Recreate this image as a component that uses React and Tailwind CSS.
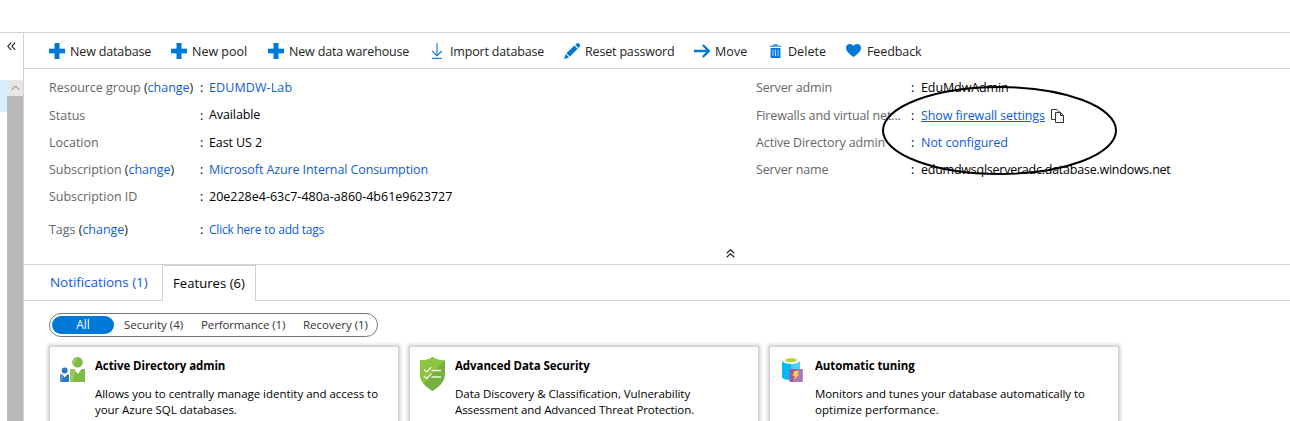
const blue = 'text-[#0f5be0]';

function Plus() {
  return (
    <svg width="16" height="16" viewBox="0 0 16 16" className="block">
      <path d="M0 5.5h16v5H0z" fill="#4ba3e8" />
      <path d="M5.5 0h5v16h-5z" fill="#0078d7" />
      <path d="M0 6h16v4H0z" fill="#0078d7" />
    </svg>
  );
}

function Download() {
  return (
    <svg width="14" height="16" viewBox="0 0 14 16" className="block" fill="none" stroke="#1a86db" strokeWidth="1.2">
      <path d="M7 0v12.5M2.2 8 7 12.8 11.8 8M2 15.3h10" />
    </svg>
  );
}

function Pencil() {
  return (
    <svg width="17" height="16" viewBox="0 0 17 16" className="block" fill="#0078d7">
      <path d="M0 16 1.7 11 5.2 14.4zM2.4 10.2 10.4 2.6 13.7 5.8 5.9 13.6zM11.3 1.8 12.8.5Q13.8-.3 14.8.5L15.8 1.5Q16.6 2.5 15.8 3.5L14.5 5z" />
    </svg>
  );
}

function Arrow() {
  return (
    <svg width="16" height="14" viewBox="0 0 16 14" className="block" fill="none" stroke="#0078d7" strokeWidth="2.3">
      <path d="M0 7h14.5M8.8 1l6 6-6 6" />
    </svg>
  );
}

function Trash() {
  return (
    <svg width="11" height="14" viewBox="0 0 11 14" className="block">
      <path d="M0 1.5h3.3V0h4.4v1.5H11V3H0z" fill="#4da0e2" />
      <path d="M.6 4h9.8v10H.6z" fill="#0078d7" />
      <path d="M3 5.5v6.5M5.5 5.5v6.5M8 5.5v6.5" stroke="#b5d8f5" strokeWidth="1" />
    </svg>
  );
}

function Heart() {
  return (
    <svg width="15" height="13" viewBox="0 0 15 13" className="block" fill="#0078d7">
      <path d="M7.5 13C5 11 0 7.8 0 3.9 0 1.6 1.7 0 3.8 0 5.5 0 6.9.9 7.5 2.3 8.1.9 9.5 0 11.2 0 13.3 0 15 1.6 15 3.9 15 7.8 10 11 7.5 13z" />
    </svg>
  );
}

function People() {
  return (
    <svg width="26" height="26" viewBox="0 0 26 26" className="block">
      <circle cx="17.5" cy="5.2" r="5.2" fill="#7fba42" />
      <path d="M17.5 0a5.2 5.2 0 0 0-4 8.6z" fill="#9ccb66" />
      <path d="M10 12h4l3.800 5 3.800-5H25v13H10z" fill="#7fba42" />
      <path d="M10 12h4l1.500 2L13 25h-3z" fill="#95c95f" />
      <circle cx="4.7" cy="13.600" r="3" fill="#2e75b9" />
      <path d="M0 17.500h2.300l2.400 3 2.400-3H9V25H0z" fill="#2e75b9" />
      <path d="M0 17.500h2.300l1.200 1.500L2 25H0z" fill="#5693cf" />
    </svg>
  );
}

function Shield() {
  return (
    <svg width="26" height="34" viewBox="0 0 26 34" className="block">
      <path d="M12.500 0C9 2.800 5 3.200 0 3.600V17c0 8 6 13 12.500 17C19 30 25 25 25 17V3.600C20 3.200 16 2.800 12.500 0z" fill="#76b043" />
      <path d="M12.500 0C9 2.800 5 3.200 0 3.600V17c0 4 1.500 7.200 3.800 9.800L24 3.500C19.500 3.100 16 2.700 12.500 0z" fill="#8cc43f" />
      <path d="M4 12.500 6.800 15l4.500-4.800M11.500 13.500H21M4 19l2.800 2.500 4.500-4.800M11.500 20H21" fill="none" stroke="#eef7df" strokeWidth="1.300" />
    </svg>
  );
}

function Tuning() {
  return (
    <svg width="21" height="25" viewBox="0 0 21 25" className="ml-[2px] block">
      <path d="M0 3.500h18V20c0 1.800-4 3-9 3s-9-1.200-9-3z" fill="#00bcf2" />
      <path d="M9 3.500h9V20c0 1.800-4 3-9 3z" fill="#4ccff5" />
      <ellipse cx="9" cy="3.500" rx="9" ry="3.500" fill="#f3faf5" />
      <ellipse cx="9" cy="3.200" rx="5.800" ry="2" fill="#b8d432" />
      <path d="M7.500 12H20.500v13h-13z" fill="#9b5ba5" />
      <path d="M14.500 12h6v13h-9z" fill="#ab79b5" />
      <path d="M12.500 14h4.300l-2 3.400h2.500L11.500 23l1.500-4.200h-2.500z" fill="#fdd835" />
    </svg>
  );
}

const actions = [
  { label: 'New database', icon: <Plus />, box: 'w-[122px]', slot: 'w-[21px]', track: 'tracking-[-0.15px]' },
  { label: 'New pool', icon: <Plus />, box: 'w-[97px]', slot: 'w-[21px]', track: 'tracking-[0px]' },
  { label: 'New data warehouse', icon: <Plus />, box: 'w-[162px]', slot: 'w-[21px]', track: 'tracking-[-0.17px]' },
  { label: 'Import database', icon: <Download />, box: 'w-[134px]', slot: 'w-[20px]', track: 'tracking-[-0.17px]' },
  { label: 'Reset password', icon: <Pencil />, box: 'w-[130px]', slot: 'w-[21px]', track: 'tracking-[-0.17px]' },
  { label: 'Move', icon: <Arrow />, box: 'w-[76px]', slot: 'w-[21px]', track: 'tracking-[0.1px]' },
  { label: 'Delete', icon: <Trash />, box: 'w-[76px]', slot: 'w-[18px]', track: 'tracking-[0.05px]' },
  { label: 'Feedback', icon: <Heart />, box: 'w-[90px]', slot: 'w-[21px]', track: 'tracking-[-0.1px]' },
];

function Row({ label, change, value, link, labelBox, colonBox, size = 'h-[27px]', track = 'tracking-[-0.1px]', labelTrack = 'tracking-[-0.02px]', children }) {
  return (
    <div className={`flex items-center whitespace-nowrap ${size}`}>
      <div className={`${labelBox} ${labelTrack} text-[#666]`}>
        {label}
        {change && <span className="text-[#222]"> (<span className={blue}>change</span>)</span>}
      </div>
      <div className={colonBox}>:</div>
      <div className={`${track} ${link ? blue : ''}`}>{value}</div>
      {children}
    </div>
  );
}

function Card({ icon, title, lines, lineTracks }) {
  return (
    <div className="flex h-[110px] w-[350px] shrink-0 border border-[#d2d2d2] bg-white pl-[10px] shadow-[0_0_4px_1px_rgba(0,0,0,0.22)]">
      <div className="w-[35px] shrink-0 pt-[10px]">{icon}</div>
      <div className="whitespace-nowrap pt-[11px] text-[11.5px] leading-[16px]">
        <div className="font-bold tracking-[-0.08px]">{title}</div>
        <div className="mt-[12px]">
          {lines.map((l, i) => <div key={l} className={lineTracks[i]}>{l}</div>)}
        </div>
      </div>
    </div>
  );
}

const left = { labelBox: 'w-[151px]', colonBox: 'w-[9px]' };
const right = { labelBox: 'w-[155px]', colonBox: 'w-[10px]', labelTrack: 'tracking-[-0.13px]' };

export default function App() {
  return (
    <div className="relative flex h-[421px] w-[1290px] flex-col overflow-hidden bg-white font-['Open_Sans',sans-serif] text-[12.5px] leading-[18px] text-black">
      <div className="h-[32px] shrink-0" />
      <div className="flex flex-1 border-t border-[#d2d2d2]">
        <div className="flex w-[24px] shrink-0 flex-col border-r border-[#d2d2d2]">
          <div className="h-[47px] pl-[7px] pt-[9px]">
            <svg width="9" height="9" viewBox="0 0 9 9" className="block" fill="none" stroke="#222" strokeWidth="1.100"><path d="M4.200.7.8 4.300l3.400 3.600M8.200.7 4.800 4.300l3.400 3.600" /></svg>
          </div>
          <div className="flex flex-1">
            <div className="h-[32px] w-[7px] bg-[#d9edfd]" />
            <div className="flex flex-1 flex-col bg-[#b9b9b9]">
              <div className="flex h-[16px] items-center justify-center bg-[#e6e6e6]">
                <svg width="9" height="6" viewBox="0 0 9 6" fill="none" stroke="#777" strokeWidth="1"><path d="M.5 5 4.500 1l4 4" /></svg>
              </div>
            </div>
          </div>
        </div>

        <div className="flex flex-1 flex-col">
          <div className="flex h-[36px] items-center border-b border-[#d2d2d2] pl-[25px] text-[#222]">
            {actions.map((a) => (
              <div key={a.label} className={`flex shrink-0 items-center whitespace-nowrap ${a.box}`}>
                <div className={`shrink-0 ${a.slot}`}>{a.icon}</div>
                <div className={`pt-[2px] ${a.track}`}>{a.label}</div>
              </div>
            ))}
          </div>

          <div className="flex h-[196px] flex-col border-b border-[#d2d2d2]">
            <div className="flex h-[176px] pl-[25px] pt-[5px]">
              <div className="w-[707px]">
                <Row {...left} size="h-[28px]" label="Resource group" change value="EDUMDW-Lab" link track="tracking-[0.1px]" />
                <Row {...left} label="Status" value={<div className="-mt-[2px]">Available</div>} />
                <Row {...left} label="Location" value="East US 2" />
                <Row {...left} label="Subscription" change value="Microsoft Azure Internal Consumption" link />
                <Row {...left} label="Subscription ID" value="20e228e4-63c7-480a-a860-4b61e9623727" track="tracking-[0px]" />
                <Row {...left} label="Tags" change value={<span className="text-[12px]">Click here to add tags</span>} link size="h-[39px]" track="tracking-[-0.22px]" />
              </div>
              <div>
                <Row {...right} size="h-[28px]" label="Server admin" value="EduMdwAdmin" />
                <Row {...right} label="Firewalls and virtual net..." value={<span className="underline">Show firewall settings</span>} link>
                  <svg width="13" height="14" viewBox="0 0 13 14" className="ml-[6px]" fill="#fff" stroke="#333" strokeWidth="1"><path d="M5 10.500H.5V.5H6L8.500 3v2" /><path d="M4.500 3.500H9.500L12.500 6.500V13.500H4.500zM9.500 3.500V6.500H12.500" /></svg>
                </Row>
                <Row {...right} label="Active Directory admin" value="Not configured" link track="tracking-[-0.03px]" />
                <Row {...right} label="Server name" value="edumdwsqlserveradc.database.windows.net" track="tracking-[-0.24px]" />
              </div>
            </div>
            <div className="pl-[702px] pt-[4px]">
              <svg width="9" height="9" viewBox="0 0 9 9" className="block" fill="none" stroke="#222" strokeWidth="1.200"><path d="M.7 4.200 4.500.8l3.800 3.400M.7 8.200 4.500 4.800l3.800 3.400" /></svg>
            </div>
          </div>

          <div className="flex h-[36px] shrink-0 text-[13.500px]">
            <div className="w-[138px] border-b border-[#d2d2d2] pl-[26px] pt-[8px] tracking-[-0.06px] text-[#0f5be0]">Notifications (1)</div>
            <div className="w-[94px] border-x border-t border-[#d2d2d2] pl-[10px] pt-[8px] text-[13px] tracking-[0.07px]">Features (6)</div>
            <div className="flex-1 border-b border-[#d2d2d2]" />
          </div>

          <div className="pl-[25px] pt-[12px]">
            <div className="flex h-[24px] w-[329px] items-center whitespace-nowrap rounded-full border border-[#777] pl-[2px] text-[11.500px] text-[#333]">
              <div className="flex h-[18px] w-[62px] items-center justify-center rounded-full bg-[#0078d7] text-[12px] text-white">All</div>
              <div className="w-[77px] pl-[10px]">Security (4)</div>
              <div className="w-[102px] pl-[10px] tracking-[-0.12px]">Performance (1)</div>
              <div className="pl-[10px]">Recovery (1)</div>
            </div>
          </div>

          <div className="flex gap-[10px] pl-[25px] pt-[9px]">
            <Card icon={<People />} title="Active Directory admin" lineTracks={['tracking-[-0.03px]', 'tracking-[-0.06px]']} lines={['Allows you to centrally manage identity and access to', 'your Azure SQL databases.']} />
            <Card icon={<Shield />} title="Advanced Data Security" lineTracks={['tracking-[-0.05px]', 'tracking-[-0.08px]']} lines={['Data Discovery & Classification, Vulnerability', 'Assessment and Advanced Threat Protection.']} />
            <Card icon={<Tuning />} title="Automatic tuning" lineTracks={['tracking-[-0.08px]', 'tracking-[0.08px]']} lines={['Monitors and tunes your database automatically to', 'optimize performance.']} />
          </div>
        </div>
      </div>

      <svg width="236" height="90" viewBox="0 0 236 90" className="absolute left-[882px] top-[86px]" fill="none" stroke="#000" strokeWidth="2">
        <ellipse cx="117.500" cy="44.500" rx="116.500" ry="43.500" />
      </svg>
    </div>
  );
}
